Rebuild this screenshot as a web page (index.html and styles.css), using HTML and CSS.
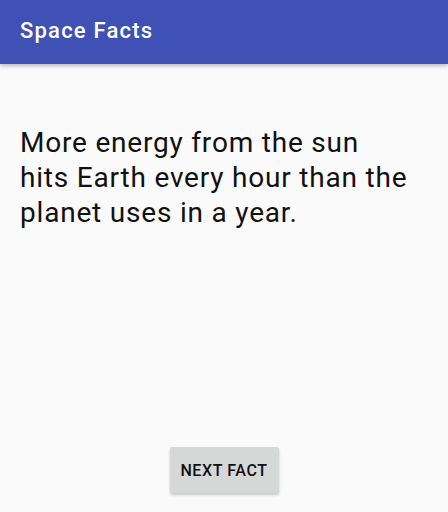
FILE: index.html
```html
<!DOCTYPE html>
<html lang="en">
<head>
    <meta charset="UTF-8">
    <meta name="viewport" content="width=device-width, initial-scale=1.0">
    <title>Space Facts</title>
    <link rel="stylesheet" href="styles.css">
</head>
<body>
    <header class="app-bar">
        <h1>Space Facts</h1>
    </header>
    <main class="content">
        <p class="fact">More energy from the sun hits Earth every hour than the planet uses in a year.</p>
        <button class="next-btn">Next Fact</button>
    </main>
</body>
</html>
```

FILE: styles.css
```css
/* General Styles */
html, body {
    height: 100%;
}
body {
    font-family: Roboto, "Liberation Sans", sans-serif;
    margin: 0;
    padding: 0;
    background-color: #fafafa;
    display: flex;
    flex-direction: column;
}
.app-bar {
    background-color: #3f51b5;
    color: white;
    height: 64px;
    padding: 0 20px;
    display: flex;
    align-items: center;
    box-shadow: 0 2px 4px rgba(0, 0, 0, 0.25);
    position: relative;
    z-index: 1;
}
.app-bar h1 {
    margin: 0;
    font-size: 22px;
    font-weight: 500;
    letter-spacing: 1.2px;
    padding-bottom: 3px;
}
.content {
    flex: 1;
    display: flex;
    flex-direction: column;
    align-items: center;
    padding: 0 20px 19px;
}
.fact {
    align-self: stretch;
    max-width: 390px;
    margin: 61px 0 0;
    font-size: 28px;
    line-height: 35px;
    letter-spacing: 0.8px;
    color: #111;
}
.next-btn {
    margin-top: auto;
    width: 109px;
    height: 46px;
    background-color: #d6d7d7;
    color: #111;
    border: none;
    border-radius: 2px;
    font-family: Roboto, sans-serif;
    font-size: 16px;
    font-weight: 500;
    letter-spacing: 0.6px;
    text-transform: uppercase;
    box-shadow: 0 2px 3px rgba(0, 0, 0, 0.2);
    cursor: pointer;
}
```
